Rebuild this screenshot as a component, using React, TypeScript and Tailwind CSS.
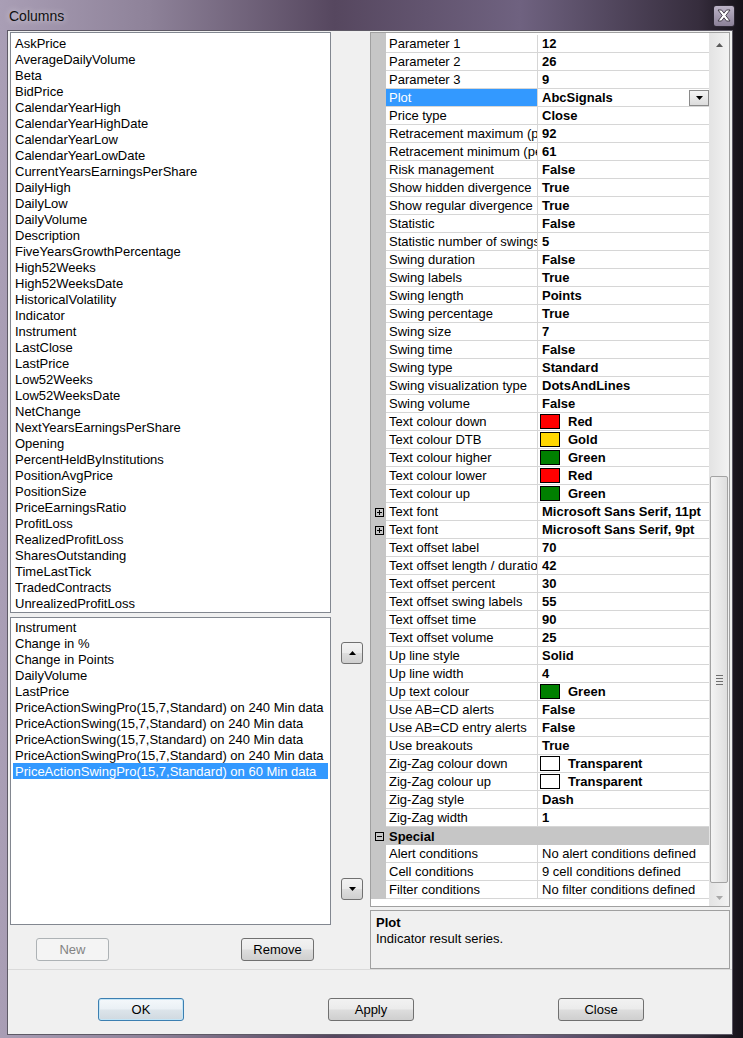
import React from "react"

const available = [
  "AskPrice",
  "AverageDailyVolume",
  "Beta",
  "BidPrice",
  "CalendarYearHigh",
  "CalendarYearHighDate",
  "CalendarYearLow",
  "CalendarYearLowDate",
  "CurrentYearsEarningsPerShare",
  "DailyHigh",
  "DailyLow",
  "DailyVolume",
  "Description",
  "FiveYearsGrowthPercentage",
  "High52Weeks",
  "High52WeeksDate",
  "HistoricalVolatility",
  "Indicator",
  "Instrument",
  "LastClose",
  "LastPrice",
  "Low52Weeks",
  "Low52WeeksDate",
  "NetChange",
  "NextYearsEarningsPerShare",
  "Opening",
  "PercentHeldByInstitutions",
  "PositionAvgPrice",
  "PositionSize",
  "PriceEarningsRatio",
  "ProfitLoss",
  "RealizedProfitLoss",
  "SharesOutstanding",
  "TimeLastTick",
  "TradedContracts",
  "UnrealizedProfitLoss",
]

const selected = [
  "Instrument",
  "Change in %",
  "Change in Points",
  "DailyVolume",
  "LastPrice",
  "PriceActionSwingPro(15,7,Standard) on 240 Min data",
  "PriceActionSwing(15,7,Standard) on 240 Min data",
  "PriceActionSwing(15,7,Standard) on 240 Min data",
  "PriceActionSwingPro(15,7,Standard) on 240 Min data",
  "PriceActionSwingPro(15,7,Standard) on 60 Min data",
]

type Row = {
  name: string
  value?: string
  kind?: "plot" | "color" | "font" | "cat" | "plain"
  color?: string
}

const rows: Row[] = [
  { name: "Parameter 1", value: "12" },
  { name: "Parameter 2", value: "26" },
  { name: "Parameter 3", value: "9" },
  { name: "Plot", value: "AbcSignals", kind: "plot" },
  { name: "Price type", value: "Close" },
  { name: "Retracement maximum (percent)", value: "92" },
  { name: "Retracement minimum (percent)", value: "61" },
  { name: "Risk management", value: "False" },
  { name: "Show hidden divergence", value: "True" },
  { name: "Show regular divergence", value: "True" },
  { name: "Statistic", value: "False" },
  { name: "Statistic number of swings", value: "5" },
  { name: "Swing duration", value: "False" },
  { name: "Swing labels", value: "True" },
  { name: "Swing length", value: "Points" },
  { name: "Swing percentage", value: "True" },
  { name: "Swing size", value: "7" },
  { name: "Swing time", value: "False" },
  { name: "Swing type", value: "Standard" },
  { name: "Swing visualization type", value: "DotsAndLines" },
  { name: "Swing volume", value: "False" },
  { name: "Text colour down", value: "Red", kind: "color", color: "#ff0000" },
  { name: "Text colour DTB", value: "Gold", kind: "color", color: "#ffd700" },
  { name: "Text colour higher", value: "Green", kind: "color", color: "#008000" },
  { name: "Text colour lower", value: "Red", kind: "color", color: "#ff0000" },
  { name: "Text colour up", value: "Green", kind: "color", color: "#008000" },
  { name: "Text font", value: "Microsoft Sans Serif, 11pt", kind: "font" },
  { name: "Text font", value: "Microsoft Sans Serif, 9pt", kind: "font" },
  { name: "Text offset label", value: "70" },
  { name: "Text offset length / duration", value: "42" },
  { name: "Text offset percent", value: "30" },
  { name: "Text offset swing labels", value: "55" },
  { name: "Text offset time", value: "90" },
  { name: "Text offset volume", value: "25" },
  { name: "Up line style", value: "Solid" },
  { name: "Up line width", value: "4" },
  { name: "Up text colour", value: "Green", kind: "color", color: "#008000" },
  { name: "Use AB=CD alerts", value: "False" },
  { name: "Use AB=CD entry alerts", value: "False" },
  { name: "Use breakouts", value: "True" },
  { name: "Zig-Zag colour down", value: "Transparent", kind: "color", color: "#ffffff" },
  { name: "Zig-Zag colour up", value: "Transparent", kind: "color", color: "#ffffff" },
  { name: "Zig-Zag style", value: "Dash" },
  { name: "Zig-Zag width", value: "1" },
  { name: "Special", kind: "cat" },
  { name: "Alert conditions", value: "No alert conditions defined", kind: "plain" },
  { name: "Cell conditions", value: "9 cell conditions defined", kind: "plain" },
  { name: "Filter conditions", value: "No filter conditions defined", kind: "plain" },
]

const btn =
  "flex items-center justify-center rounded-[3px] border text-[13px] text-black bg-[linear-gradient(180deg,#f2f2f2_0%,#ebebeb_48%,#dddddd_52%,#cfcfcf_100%)]"

function Triangle({ up, color = "#000" }: { up?: boolean; color?: string }) {
  return (
    <svg width="7" height="4" viewBox="0 0 7 4">
      <path d={up ? "M0 4 L3.5 0 L7 4 Z" : "M0 0 L7 0 L3.5 4 Z"} fill={color} />
    </svg>
  )
}

function BoxSign({ plus }: { plus?: boolean }) {
  return (
    <svg width="9" height="9" viewBox="0 0 9 9">
      <rect x="0.5" y="0.5" width="8" height="8" fill="none" stroke="#000" />
      <path d="M2 4.5H7" stroke="#000" />
      {plus && <path d="M4.5 2V7" stroke="#000" />}
    </svg>
  )
}

function GridRow({ row }: { row: Row }) {
  if (row.kind === "cat") {
    return (
      <div className="flex h-[18px] bg-[#c6c6c6]">
        <div className="flex w-[15px] items-center pl-[4px]">
          <BoxSign />
        </div>
        <div className="flex items-center pl-[3px] pt-[1px] font-bold">{row.name}</div>
      </div>
    )
  }
  const isPlot = row.kind === "plot"
  return (
    <div className="flex h-[18px]">
      <div className="flex w-[15px] shrink-0 items-center bg-[#c6c6c6] pl-[4px]">
        {row.kind === "font" && <BoxSign plus />}
      </div>
      <div
        className={`flex w-[152px] shrink-0 items-center overflow-hidden whitespace-nowrap border-r border-b border-[#d6d6d6] pl-[3px] pt-[1px] ${
          isPlot ? "bg-[#3399ff] text-white" : "bg-white"
        }`}
      >
        {row.name}
      </div>
      <div className="flex min-w-0 flex-1 items-center overflow-hidden whitespace-nowrap border-b border-[#d6d6d6] bg-white">
        {row.kind === "color" ? (
          <div className="flex items-center gap-[8px] pl-[2px]">
            <span
              className="h-[15px] w-[20px] shrink-0 border border-black"
              style={{ backgroundColor: row.color }}
            />
            <span className="pt-[1px] font-bold">{row.value}</span>
          </div>
        ) : (
          <span className={`pl-[4px] pt-[1px] ${row.kind === "plain" ? "" : "font-bold"}`}>{row.value}</span>
        )}
        {isPlot && (
          <div className="ml-auto flex h-[16px] w-[20px] shrink-0 items-center justify-center border border-[#8a8a8a] bg-[linear-gradient(180deg,#f4f4f4,#dcdcdc)]">
            <Triangle />
          </div>
        )}
      </div>
    </div>
  )
}

export default function App() {
  return (
    <div className="h-[1038px] w-[743px] overflow-hidden bg-[linear-gradient(90deg,#a99eb5_0%,#8e8299_20%,#56475f_45%,#6f6280_70%,#362d3d_94%,#151118_100%)] font-['Liberation_Sans',Arial,sans-serif] text-[13px] leading-[16px] text-black">
      {/* Title bar */}
      <div className="flex h-[30px] items-center justify-between pl-[9px] pr-[8px] pt-[1px]">
        <span className="text-[14px] text-[#101010] [text-shadow:0_0_6px_rgba(255,255,255,0.7)]">Columns</span>
        <div className="flex h-[22px] w-[22px] items-center justify-center rounded-[3px] border border-[#2e2834] bg-[linear-gradient(180deg,#bdb4c8,#8b8097)]">
          <svg width="14" height="13" viewBox="0 0 14 13">
            <path
              d="M1 1 L4.5 1 L7 4.2 L9.5 1 L13 1 L8.8 6.5 L13 12 L9.5 12 L7 8.8 L4.5 12 L1 12 L5.2 6.5 Z"
              fill="#fff"
              stroke="#3a3340"
              strokeWidth="0.9"
            />
          </svg>
        </div>
      </div>

      {/* Client */}
      <div className="ml-[7px] mr-[10px] flex h-[1005px] flex-col border border-[#5e5a66] bg-[#f0f0f0]">
        <div className="flex h-[939px] border-b border-[#dadada] px-[2px] pt-[1px]">
          {/* Left column */}
          <div className="flex w-[321px] flex-col">
            <div className="h-[581px] border border-[#828790] bg-white pt-[3px]">
              {available.map((a) => (
                <div key={a} className="h-[16px] whitespace-nowrap pl-[4px]">
                  {a}
                </div>
              ))}
            </div>
            <div className="mt-[4px] h-[308px] border border-[#828790] bg-white px-[2px] pt-[1px]">
              {selected.map((s, i) => (
                <div
                  key={i}
                  className={`h-[16px] whitespace-nowrap pl-[2px] pt-[1px] ${
                    i === selected.length - 1 ? "bg-[#3399ff] text-white" : ""
                  }`}
                >
                  {s}
                </div>
              ))}
            </div>
            <div className="mt-[13px] flex">
              <div className="ml-[26px] flex h-[23px] w-[73px] items-center justify-center rounded-[3px] border border-[#adb2b5] bg-[#f4f4f4] text-[#838383]">
                New
              </div>
              <div className={`${btn} ml-[132px] h-[23px] w-[73px] border-[#707070]`}>Remove</div>
            </div>
          </div>

          {/* Middle column */}
          <div className="flex w-[39px] flex-col pl-[10px] pt-[610px]">
            <div className={`${btn} h-[22px] w-[22px] border-[#707070]`}>
              <Triangle up />
            </div>
            <div className={`${btn} mt-[214px] h-[22px] w-[22px] border-[#707070]`}>
              <Triangle />
            </div>
          </div>

          {/* Right column */}
          <div className="flex w-[360px] flex-col">
            <div className="flex h-[875px] border border-[#a0a0a0] bg-white">
              <div className="flex min-w-0 flex-1 flex-col">
                <div className="h-[2px] w-[15px] bg-[#c6c6c6]" />
                {rows.map((r, i) => (
                  <GridRow key={i} row={r} />
                ))}
              </div>
              {/* Scrollbar */}
              <div className="flex w-[20px] shrink-0 flex-col bg-[linear-gradient(90deg,#e3e3e3,#f2f2f2)]">
                <div className="flex h-[17px] items-end justify-center pb-[3px]">
                  <Triangle up color="#5a5a5a" />
                </div>
                <div className="h-[426px]" />
                <div className="mx-[1px] flex h-[407px] items-center justify-center rounded-[2px] border border-[#a3a3a3] bg-[linear-gradient(90deg,#f4f4f4,#dedede)]">
                  <div className="flex flex-col gap-[2px]">
                    <div className="h-[1px] w-[7px] bg-[#6e6e6e]" />
                    <div className="h-[1px] w-[7px] bg-[#6e6e6e]" />
                    <div className="h-[1px] w-[7px] bg-[#6e6e6e]" />
                    <div className="h-[1px] w-[7px] bg-[#6e6e6e]" />
                  </div>
                </div>
                <div className="flex-1" />
                <div className="flex h-[17px] items-center justify-center">
                  <Triangle color="#a8a8a8" />
                </div>
              </div>
            </div>
            <div className="mt-[3px] h-[59px] border border-[#a0a0a0] bg-[#f0f0f0] pl-[5px] pt-[4px]">
              <div className="font-bold">Plot</div>
              <div>Indicator result series.</div>
            </div>
          </div>
        </div>

        {/* Bottom buttons */}
        <div className="flex flex-1 pt-[28px]">
          <div className="ml-[90px] flex h-[23px] w-[86px] items-center justify-center rounded-[3px] border border-[#3c7fb1] bg-[linear-gradient(180deg,#f4f8fb_0%,#eaf0f5_48%,#dce4ea_52%,#d0d9e0_100%)] shadow-[inset_0_0_0_1px_#c4e5f6]">
            OK
          </div>
          <div className={`${btn} ml-[144px] h-[23px] w-[86px] border-[#707070]`}>Apply</div>
          <div className={`${btn} ml-[144px] h-[23px] w-[86px] border-[#707070]`}>Close</div>
        </div>
      </div>
    </div>
  )
}
